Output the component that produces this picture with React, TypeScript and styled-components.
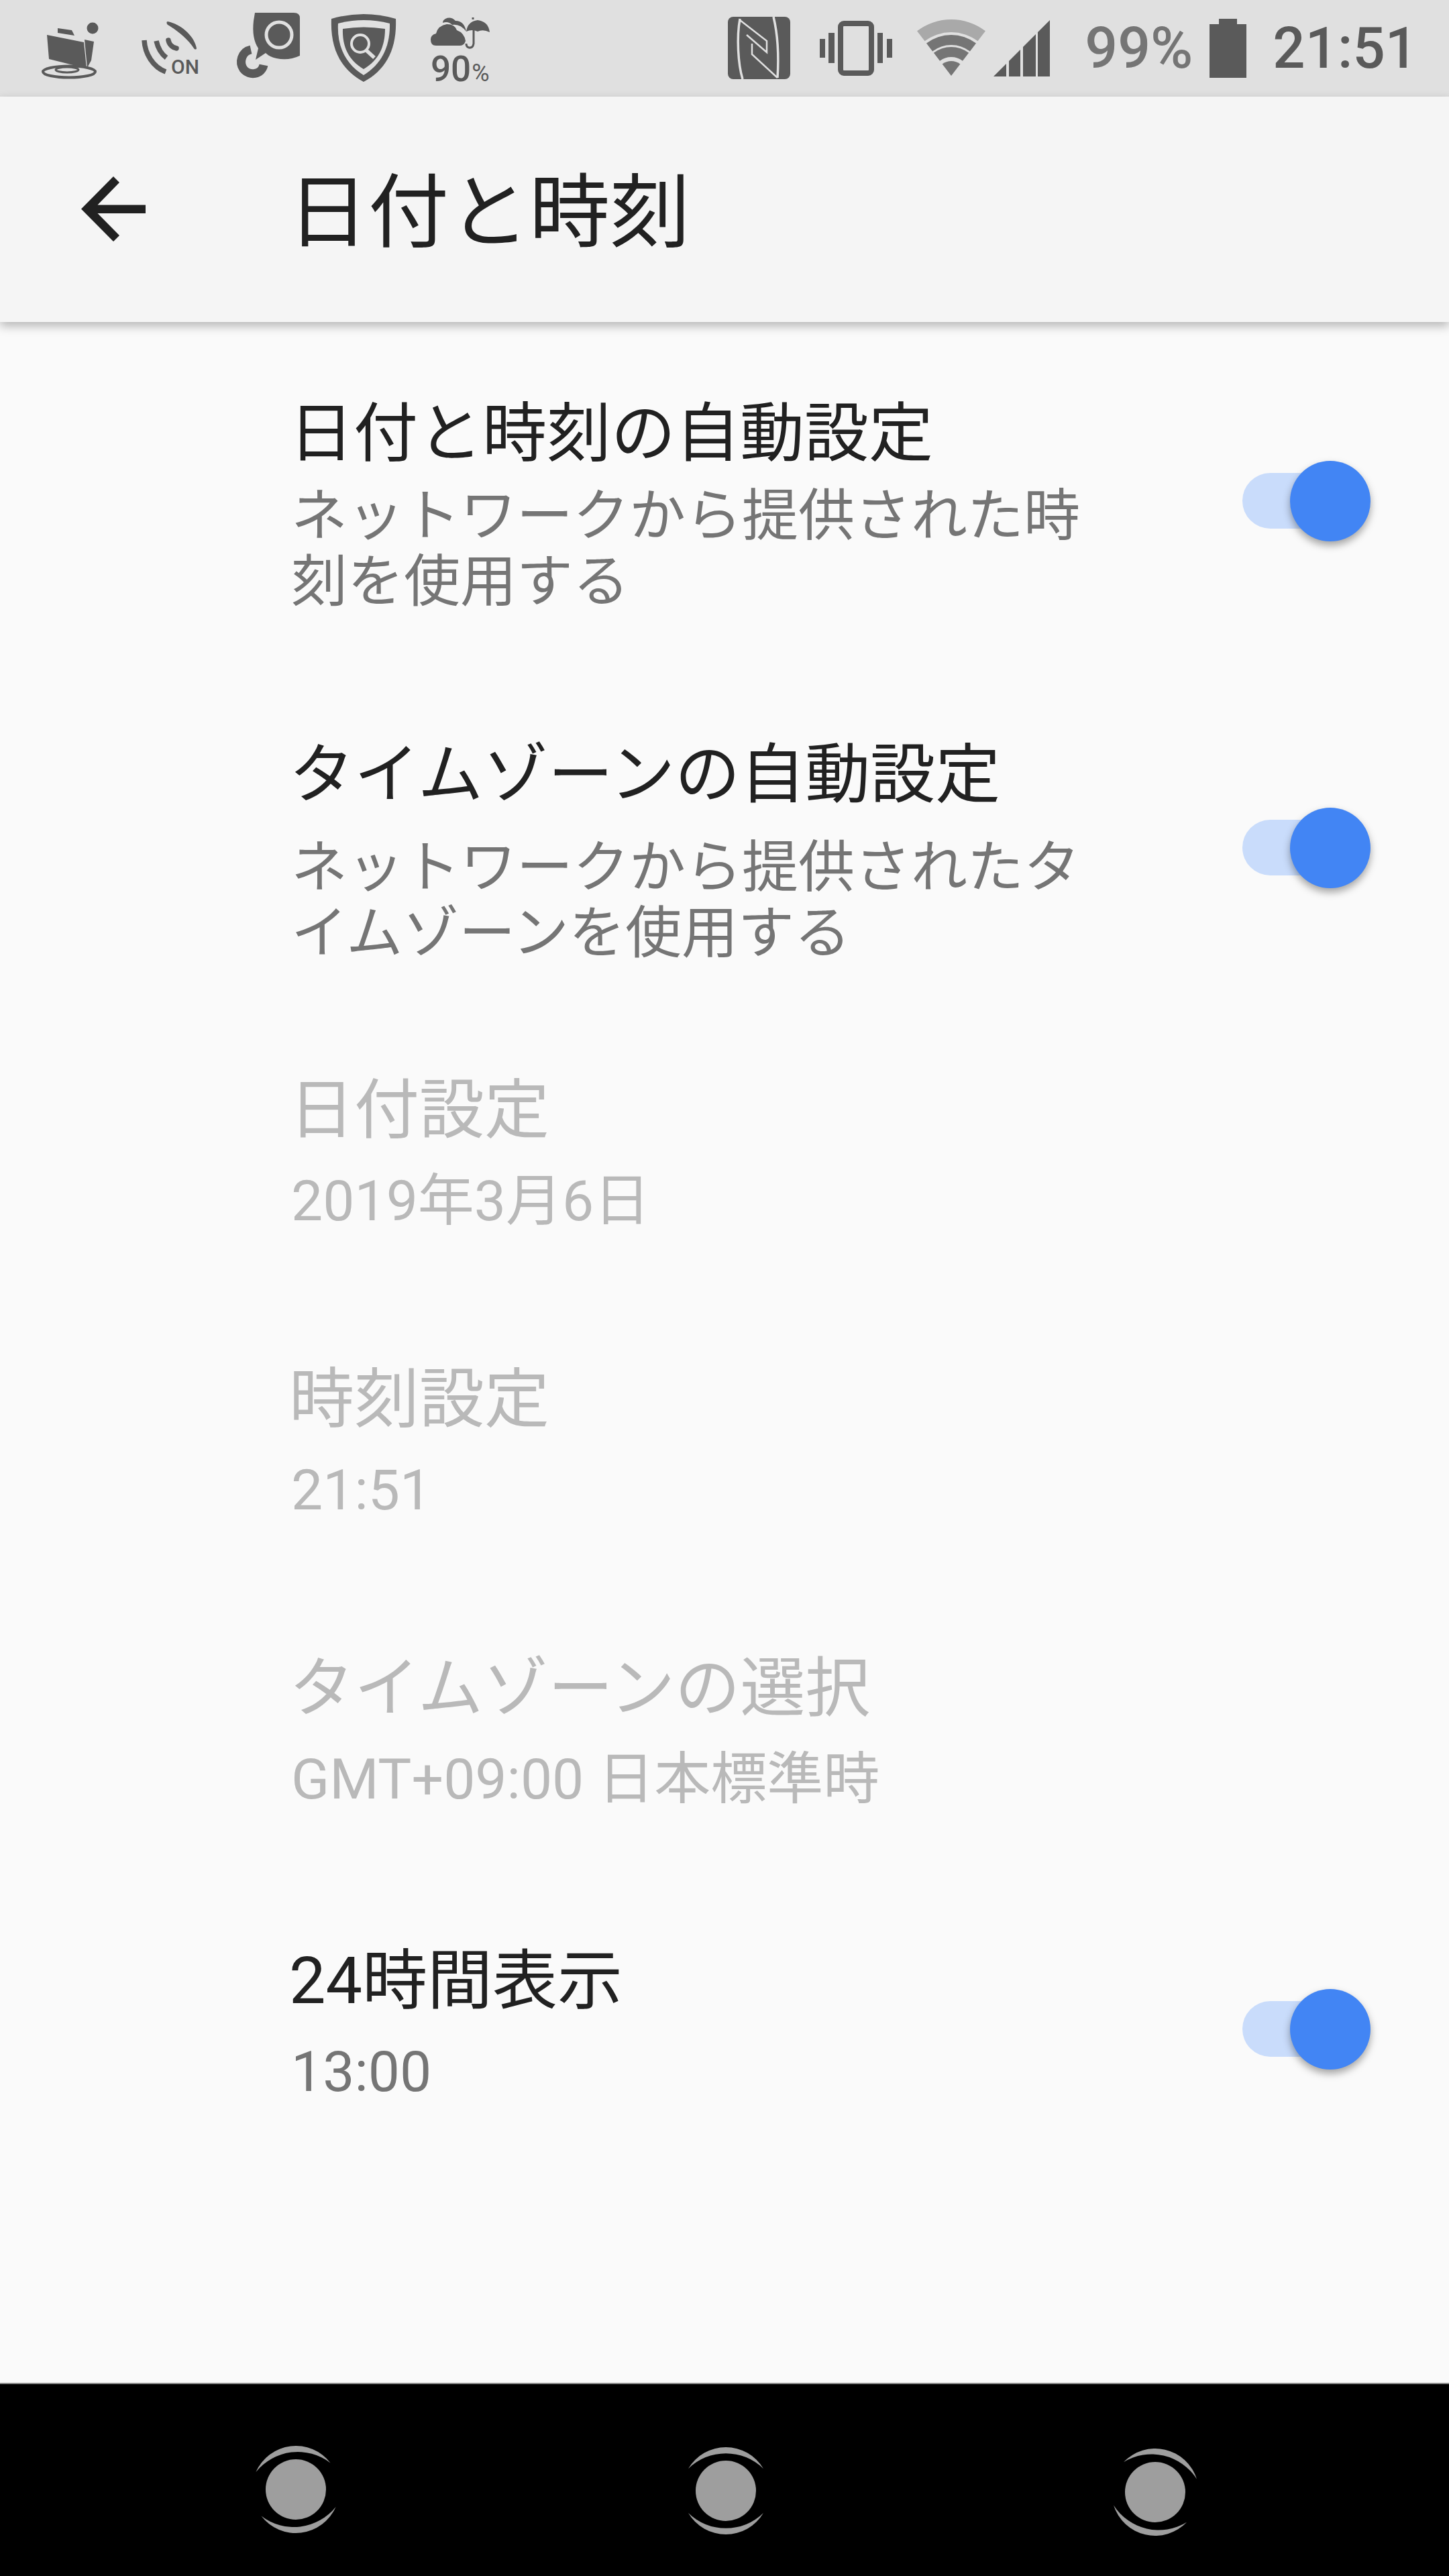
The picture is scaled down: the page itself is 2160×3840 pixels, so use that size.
import styled, { createGlobalStyle } from "styled-components";

const GlobalStyle = createGlobalStyle`
    html, body {
        margin: 0;
        padding: 0;
        background: #fafafa;
    }
`

const ICON = "#5a5a5a";
const BAR = "#e0e0e0";

// wedge slices for the wifi icon, apex at the bottom middle
function wifiBand(outer: number, inner: number) {
    const s = 0.607, c = 0.795, ax = 51, ay = 84;
    return `M${ax - outer * s} ${ay - outer * c}A${outer} ${outer} 0 0 1 ${ax + outer * s} ${ay - outer * c}`
        + `L${ax + inner * s} ${ay - inner * c}A${inner} ${inner} 0 0 0 ${ax - inner * s} ${ay - inner * c}Z`;
}

type Setting = {
    title: string;
    sub: string;
    disabled?: boolean;
    toggle?: boolean;
    top: number;
    bottom: number;
    gap: number;
    titleSize?: number;
    toggleShift?: number;
}

const settings: Setting[] = [
    {title: "日付と時刻の自動設定", sub: "ネットワークから提供された時刻を使用する", toggle: true, top: 106, bottom: 89, gap: 15, titleSize: 96, toggleShift: -5},
    {title: "タイムゾーンの自動設定", sub: "ネットワークから提供されたタイムゾーンを使用する", toggle: true, top: 89, bottom: 77, gap: 30, toggleShift: -4},
    {title: "日付設定", sub: "2019年3月6日", disabled: true, top: 77, bottom: 93, gap: 27},
    {title: "時刻設定", sub: "21:51", disabled: true, top: 93, bottom: 93, gap: 27},
    {title: "タイムゾーンの選択", sub: "GMT+09:00 日本標準時", disabled: true, top: 93, bottom: 93, gap: 27},
    {title: "24時間表示", sub: "13:00", toggle: true, top: 98, bottom: 93, gap: 27, toggleShift: 9},
]

function FolderIcon() {
    return <StatusSvg $w={84} $h={84} $ml={62} $mt={33} viewBox="0 0 84 84">
        <ellipse cx="41" cy="74" rx="39" ry="8.5" fill="none" stroke={ICON} strokeWidth="4"/>
        <ellipse cx="38" cy="71" rx="17" ry="4" fill="none" stroke={ICON} strokeWidth="3"/>
        <path d="M24 9L45 12L49 20L24 16Z" fill={ICON}/>
        <path d="M8 19L63 30L67 69L11 55Z" fill={ICON}/>
        <path d="M64 26L78 29L74 57L68 68Z" fill={ICON}/>
        <circle cx="76" cy="9" r="8.5" fill={ICON}/>
    </StatusSvg>
}

function NfcCallIcon() {
    return <StatusSvg $w={86} $h={80} $ml={64} $mt={32} viewBox="0 0 86 80">
        <path d="M40 0C60 4 80 22 83 40C83 42 80 42 79 40C70 26 55 14 40 5C38 3 38 0 40 0Z" fill={ICON}/>
        <g fill="none" stroke={ICON} strokeWidth="7.5" strokeLinecap="round">
            <path d="M5 28C6 48 18 68 37 75" strokeLinecap="butt"/>
            <path d="M23 29C25 38 30 48 38 54" strokeLinecap="butt"/>
            <path d="M41 28C42 34 47 39 53 40"/>
        </g>
        <text x="45" y="78" fontFamily="Roboto, sans-serif" fontSize="30" fontWeight="500" fill={ICON}>ON</text>
    </StatusSvg>
}

function BubbleIcon() {
    return <StatusSvg $w={96} $h={97} $ml={56} $mt={19} viewBox="0 0 96 97">
        <path d="M28 0H86Q95 0 95 8V64Q78 72 60 68Q50 66 44 60L29 70L33 53Q23 38 26 12Z" fill={ICON}/>
        <circle cx="64" cy="33" r="19" fill="none" stroke={BAR} strokeWidth="5"/>
        <path d="M22 55C8 58 4 74 11 84C20 95 38 92 41 78" fill="none" stroke={ICON} strokeWidth="13"/>
    </StatusSvg>
}

function ShieldIcon() {
    return <StatusSvg $w={96} $h={102} $ml={46} $mt={20} viewBox="0 0 96 102">
        <path d="M0 8Q48 -6 96 8C98 55 80 85 48 102C16 85 -2 55 0 8Z" fill={ICON}/>
        <path d="M10 15Q48 5 87 15C88 50 74 76 48 92C22 76 8 50 10 15Z" fill={BAR}/>
        <path d="M17 23Q48 18 80 23C80 50 70 70 48 83C26 70 16 50 17 23Z" fill={ICON}/>
        <circle cx="43" cy="45" r="13" fill="none" stroke={BAR} strokeWidth="4"/>
        <path d="M52 55L64 66" stroke={BAR} strokeWidth="5.5" fill="none"/>
    </StatusSvg>
}

function WeatherIcon() {
    return <StatusSvg $w={88} $h={98} $ml={52} $mt={25} viewBox="0 0 88 98">
        <path d="M22 3Q30 -1 37 6Q50 6 53 22Q44 10 32 12Q26 6 18 9Q18 5 22 3Z" fill={ICON}/>
        <path d="M8 43Q0 43 0 34Q0 27 8 25Q11 13 24 11Q36 11 39 20Q50 24 52 36Q50 43 44 43Z" fill={ICON}/>
        <path d="M53 22Q55 7 70 5Q86 7 88 23Q78 18 70 22Q62 18 53 22Z" fill={ICON}/>
        <path d="M63 1V4M64 20V40Q63 47 57 46Q53 45 53 40" fill="none" stroke={ICON} strokeWidth="3"/>
        <text x="0" y="96" fontFamily="Roboto, sans-serif" fontSize="53" fontWeight="500" fill={ICON}>90<tspan fontSize="36" fontWeight="400" dx="1">%</tspan></text>
    </StatusSvg>
}

function NfcMark() {
    return <StatusSvg $w={93} $h={93} $ml={0} $mt={25} viewBox="0 0 93 93">
        <rect width="93" height="93" rx="8" fill={ICON}/>
        <g fill="none" stroke={BAR} strokeWidth="2.5">
            <path d="M18 3C13 30 15 70 22 93" strokeWidth="3.5"/>
            <path d="M68 0C74 25 76 60 74 91" strokeWidth="3.5"/>
            <path d="M18 5L58 36V53L28 27"/>
            <path d="M36 40V56L74 91"/>
        </g>
    </StatusSvg>
}

function VibrateIcon() {
    return <StatusSvg $w={109} $h={82} $ml={44} $mt={31} viewBox="0 0 109 82">
        <rect x="31" y="4" width="46" height="74" rx="5" fill="none" stroke={ICON} strokeWidth="8"/>
        <rect x="13" y="18" width="9" height="45" fill={ICON}/>
        <rect x="0" y="27" width="8" height="28" fill={ICON}/>
        <rect x="86" y="18" width="8" height="45" fill={ICON}/>
        <rect x="100" y="27" width="8" height="28" fill={ICON}/>
    </StatusSvg>
}

function WifiIcon() {
    return <StatusSvg $w={102} $h={84} $ml={36} $mt={29} viewBox="0 0 102 84">
        <path d={wifiBand(84, 65)} fill="#a9a9a9"/>
        <path d={wifiBand(61, 46)} fill="#757575"/>
        <path d={wifiBand(43, 28)} fill="#757575"/>
        <path d={wifiBand(22, 0)} fill="#757575"/>
    </StatusSvg>
}

function SignalIcon() {
    return <StatusSvg $w={84} $h={84} $ml={12} $mt={30} viewBox="0 0 84 84">
        <path d="M0 84L19 65V84Z" fill={ICON}/>
        <path d="M23 61L40 44V84H23Z" fill={ICON}/>
        <path d="M44 40L63 21V84H44Z" fill={ICON}/>
        <path d="M66 18L84 0V84H66Z" fill={ICON}/>
    </StatusSvg>
}

function BatteryIcon() {
    return <StatusSvg $w={55} $h={88} $ml={25} $mt={28} viewBox="0 0 55 88">
        <path d="M14 0H41V8H55V88H0V8H14Z" fill={ICON}/>
    </StatusSvg>
}

function NavButton({rotate, top}: { rotate: number, top: number }) {
    return <NavSvg $top={top} viewBox="0 0 138 138">
        <circle cx="69" cy="69" r="45" fill="#9e9e9e"/>
        <g transform={`rotate(${rotate} 69 69)`} fill="#9e9e9e">
            <path d="M13 36A65 65 0 0 1 125 36A80 80 0 0 0 13 36Z"/>
            <path d="M13 102A65 65 0 0 0 125 102A80 80 0 0 1 13 102Z"/>
        </g>
    </NavSvg>
}

function Toggle({shift = 0}: { shift?: number }) {
    return <ToggleBox $shift={shift}>
        <ToggleTrack/>
        <ToggleThumb/>
    </ToggleBox>
}

function App() {
    return <Page>
        <GlobalStyle/>
        <StatusBar>
            <StatusGroup>
                <FolderIcon/>
                <NfcCallIcon/>
                <BubbleIcon/>
                <ShieldIcon/>
                <WeatherIcon/>
            </StatusGroup>
            <StatusGroup>
                <NfcMark/>
                <VibrateIcon/>
                <WifiIcon/>
                <SignalIcon/>
                <BatteryPercent>99%</BatteryPercent>
                <BatteryIcon/>
                <Clock>21:51</Clock>
            </StatusGroup>
        </StatusBar>
        <AppBar>
            <BackArrow viewBox="0 0 96 97">
                <path d="M96 42.5H24.5L57 9L48 0L0 48.5L48 97L57 88L24.5 55H96Z" fill="#212121"/>
            </BackArrow>
            <PageTitle>日付と時刻</PageTitle>
        </AppBar>
        <SettingsList>
            {settings.map((item) => (
                <SettingRow key={item.title} $top={item.top} $bottom={item.bottom}>
                    <SettingText>
                        <SettingTitle $disabled={item.disabled} $size={item.titleSize ?? 97}>{item.title}</SettingTitle>
                        <SettingSub $disabled={item.disabled} $gap={item.gap}>{item.sub}</SettingSub>
                    </SettingText>
                    {item.toggle && <Toggle shift={item.toggleShift}/>}
                </SettingRow>
            ))}
        </SettingsList>
        <NavBar>
            <NavButton rotate={-7} top={90}/>
            <NavButton rotate={0} top={92}/>
            <NavButton rotate={13} top={94}/>
        </NavBar>
    </Page>
}

export default App;

const FONT = `Roboto, "Noto Sans CJK JP", sans-serif`;

const Page = styled.div`
    display: flex;
    flex-direction: column;
    width: 2160px;
    height: 3840px;
    overflow: hidden;
    background: #fafafa;
    font-family: ${FONT};
`
const StatusBar = styled.div`
    display: flex;
    justify-content: space-between;
    flex: none;
    height: 144px;
    padding-right: 47px;
    background: ${BAR};
`
const StatusGroup = styled.div`
    display: flex;
    align-items: flex-start;
`
const StatusSvg = styled.svg<{ $w: number, $h: number, $ml: number, $mt: number }>`
    flex: none;
    width: ${props => props.$w}px;
    height: ${props => props.$h}px;
    margin-left: ${props => props.$ml}px;
    margin-top: ${props => props.$mt}px;
    overflow: visible;
`
const BatteryPercent = styled.span`
    margin-left: 52px;
    font-size: 86px;
    font-weight: 500;
    line-height: 144px;
    color: #757575;
`
const Clock = styled.span`
    margin-left: 39px;
    font-size: 85px;
    font-weight: 500;
    line-height: 144px;
    color: ${ICON};
`
const AppBar = styled.header`
    position: relative;
    z-index: 1;
    display: flex;
    align-items: center;
    flex: none;
    height: 336px;
    padding-left: 121px;
    background: #f5f5f5;
    box-shadow: 0 6px 14px rgba(0, 0, 0, 0.28);
`
const BackArrow = styled.svg`
    flex: none;
    width: 96px;
    height: 97px;
    margin-top: -1px;
`
const PageTitle = styled.h1`
    margin: 0 0 0 212px;
    padding-bottom: 10px;
    font-size: 120px;
    font-weight: 400;
    color: #212121;
`
const SettingsList = styled.main`
    flex: 1;
`
const SettingRow = styled.div<{ $top: number, $bottom: number }>`
    display: flex;
    align-items: center;
    justify-content: space-between;
    padding: ${props => props.$top}px 117px ${props => props.$bottom}px 431px;
`
const SettingText = styled.div`
    width: 1190px;
`
const SettingTitle = styled.div<{ $disabled?: boolean, $size: number }>`
    font-size: ${props => props.$size}px;
    line-height: 120px;
    color: ${props => (props.$disabled ? "#b9b9b9" : "#212121")};
`
const SettingSub = styled.div<{ $disabled?: boolean, $gap: number }>`
    margin: ${props => props.$gap}px 0 0 3px;
    font-size: 84px;
    line-height: 98px;
    color: ${props => (props.$disabled ? "#b9b9b9" : "#757575")};
`
const ToggleBox = styled.div<{ $shift: number }>`
    position: relative;
    flex: none;
    width: 191px;
    height: 120px;
    margin-top: ${props => props.$shift * 2}px;
`
const ToggleTrack = styled.div`
    position: absolute;
    left: 0;
    top: 18px;
    width: 170px;
    height: 83px;
    border-radius: 42px;
    background: #c9dcfb;
`
const ToggleThumb = styled.div`
    position: absolute;
    right: 0;
    top: 0;
    width: 120px;
    height: 120px;
    border-radius: 50%;
    background: #4285f4;
    box-shadow: 0 6px 12px rgba(0, 0, 0, 0.35);
`
const NavBar = styled.nav`
    display: flex;
    justify-content: space-between;
    align-items: flex-start;
    flex: none;
    box-sizing: border-box;
    height: 288px;
    padding: 0 369px 0 372px;
    border-top: 2px solid #8a8a8a;
    background: #000;
`
const NavSvg = styled.svg<{ $top: number }>`
    flex: none;
    width: 138px;
    height: 138px;
    margin-top: ${props => props.$top - 2}px;
`
